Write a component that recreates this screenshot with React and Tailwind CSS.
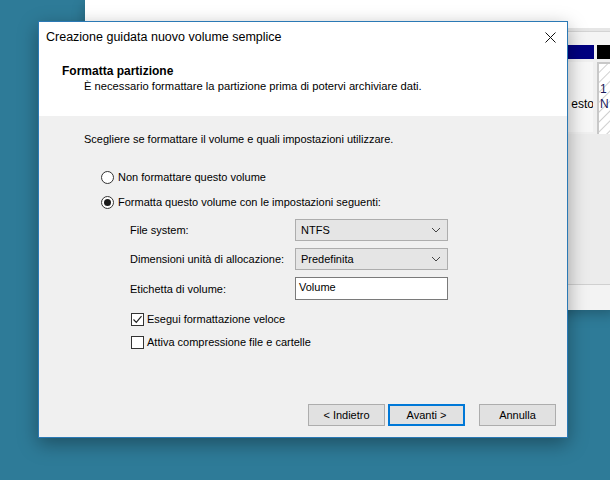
const font = { fontFamily: '"Liberation Sans", Arial, sans-serif' };

const Chevron = () => (
  <svg width="10" height="6" viewBox="0 0 10 6" className="text-[#444]">
    <path d="M1 1 L5 5 L9 1" fill="none" stroke="currentColor" strokeWidth="1" />
  </svg>
);

const Radio = ({ checked, label }) => (
  <div className="flex items-center h-[15px]">
    <div className="w-[13px] h-[13px] rounded-full border border-[#333] bg-white flex items-center justify-center">
      {checked && <div className="w-[7px] h-[7px] rounded-full bg-[#1b1b1b]" />}
    </div>
    <span className="ml-[4px]">{label}</span>
  </div>
);

const Check = ({ checked, label }) => (
  <div className="flex items-center h-[15px]">
    <div className="w-[13px] h-[13px] border border-[#333] bg-white flex items-center justify-center">
      {checked && (
        <svg width="11" height="11" viewBox="0 0 11 11">
          <path d="M1.5 5.5 L4.3 8.3 L9.5 2.2" fill="none" stroke="#222" strokeWidth="1.2" />
        </svg>
      )}
    </div>
    <span className="ml-[3px]">{label}</span>
  </div>
);

const Select = ({ value }) => (
  <div className="w-[153px] h-[22px] bg-[#e5e5e5] border border-[#adadad] flex items-center justify-between pl-[5px] pr-[6px]">
    <span>{value}</span>
    <Chevron />
  </div>
);

const Button = ({ children, primary }) => (
  <div
    className={
      "w-[77px] h-[22px] bg-[#e1e1e1] flex items-center justify-center " +
      (primary ? "border-2 border-[#0078d7]" : "border border-[#adadad]")
    }
  >
    {children}
  </div>
);

export default function App() {
  return (
    <div className="relative w-[610px] h-[480px] overflow-hidden bg-[#2e7b98] text-[11px] text-black" style={font}>
      {/* back window */}
      <div className="absolute left-[85px] top-0 w-[530px] h-[310px] bg-white flex flex-col shadow-[0_4px_12px_rgba(0,0,0,0.25)]">
        <div className="h-[28px] bg-white" />
        <div className="h-[4px] bg-[#e6e6e6] border-b border-[#d4d4d4]" />
        <div className="h-[13px] bg-[#f5f5f5]" />
        <div className="flex h-[14px] bg-[#f0f0f0] pl-[483px] gap-[3px]">
          <div className="w-[26px] bg-[#000080]" />
          <div className="flex-1 bg-black" />
        </div>
        <div className="flex h-[75px] bg-[#f0f0f0] pl-[483px] pt-[3px] gap-[4px] text-[12px]">
          <div className="w-[25px] h-[70px] bg-[#f7f7f7] flex items-center justify-end overflow-hidden">
            <span className="-mr-[1px] mt-[14px]">esto</span>
          </div>
          <div className="flex-1 h-[74px] border-2 border-[#c8c8c8] bg-[repeating-linear-gradient(135deg,#ffffff_0px,#ffffff_5px,#d0d0d0_6px,#ffffff_7px)] pl-[1px] pt-[18px] leading-[15px] text-[#1a1a5a]">
            <div>1</div>
            <div>N</div>
          </div>
        </div>
        <div className="flex-1 bg-[#ececec] border-b border-[#d0d0d0]" />
        <div className="h-[25px] bg-[#f3f3f3]" />
      </div>

      {/* wizard dialog */}
      <div className="absolute left-[38px] top-[21px] w-[530px] h-[417px] border border-[#2b79b5] bg-white flex flex-col shadow-[0_6px_18px_rgba(0,0,0,0.35)]">
        <div className="h-[31px] flex items-center justify-between pl-[7px] pr-[11px]">
          <span className="text-[12.5px]">Creazione guidata nuovo volume semplice</span>
          <svg width="11" height="11" viewBox="0 0 11 11">
            <path d="M0.5 0.5 L10.5 10.5 M10.5 0.5 L0.5 10.5" stroke="#111" strokeWidth="1" />
          </svg>
        </div>
        <div className="h-[63px] pl-[23px] pt-[11px] leading-[15px]">
          <div className="font-bold text-[12px]">Formatta partizione</div>
          <div className="pl-[22px] text-[11.2px]">È necessario formattare la partizione prima di potervi archiviare dati.</div>
        </div>
        <div className="flex-1 bg-[#f0f0f0] flex flex-col pt-[16px] pb-[11px] leading-[15px] whitespace-nowrap">
          <div className="pl-[45px]">Scegliere se formattare il volume e quali impostazioni utilizzare.</div>
          <div className="pl-[62px] mt-[23px] flex flex-col gap-[10px]">
            <Radio label="Non formattare questo volume" />
            <Radio checked label="Formatta questo volume con le impostazioni seguenti:" />
          </div>
          <div className="pl-[91px] pr-[119px] mt-[9px] flex flex-col gap-[7px]">
            <div className="flex items-center justify-between">
              <span>File system:</span>
              <Select value="NTFS" />
            </div>
            <div className="flex items-center justify-between">
              <span>Dimensioni unità di allocazione:</span>
              <Select value="Predefinita" />
            </div>
            <div className="flex items-center justify-between">
              <span className="mt-[2px]">Etichetta di volume:</span>
              <div className="w-[153px] h-[23px] bg-white border border-[#7a7a7a] pl-[3px] pt-[2px]">Volume</div>
            </div>
          </div>
          <div className="pl-[92px] mt-[12px] flex flex-col gap-[8px]">
            <Check checked label="Esegui formattazione veloce" />
            <Check label="Attiva compressione file e cartelle" />
          </div>
          <div className="flex-1" />
          <div className="flex justify-end pr-[11px]">
            <Button>&lt; Indietro</Button>
            <div className="ml-[3px]">
              <Button primary>Avanti &gt;</Button>
            </div>
            <div className="ml-[14px]">
              <Button>Annulla</Button>
            </div>
          </div>
        </div>
      </div>
    </div>
  );
}
